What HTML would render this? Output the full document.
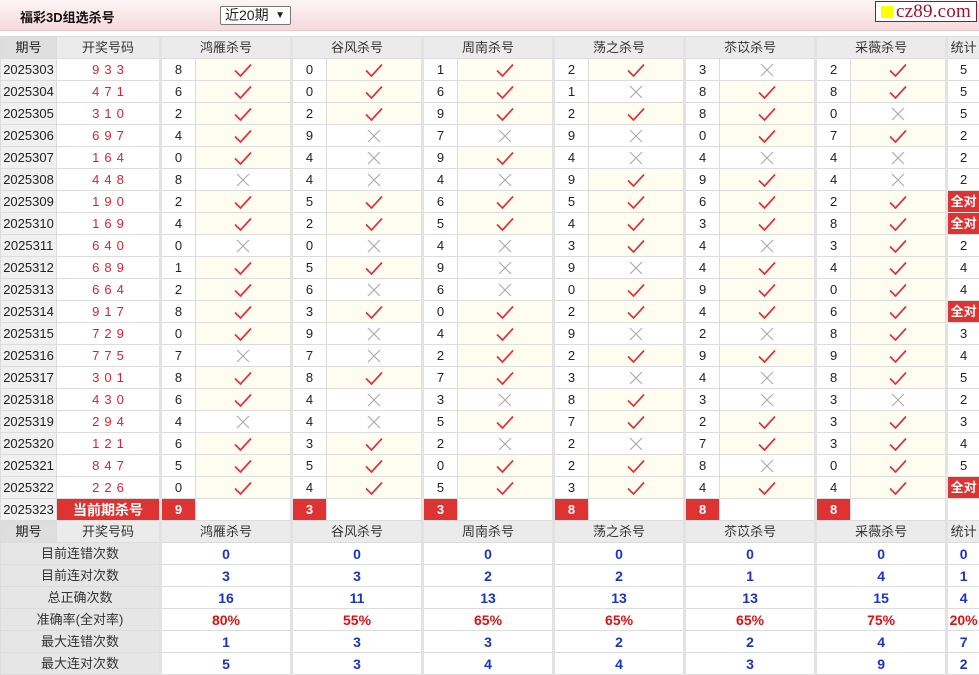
<!DOCTYPE html>
<html><head><meta charset="utf-8">
<style>
*{margin:0;padding:0;box-sizing:border-box}
body{width:979px;height:674px;overflow:hidden;background:#fff;font-family:"Liberation Sans","Noto Sans CJK SC",sans-serif;font-size:13px;color:#222}
.top{position:absolute;left:0;top:0;width:979px;height:31px;background:linear-gradient(#fdf5f6,#f6d9dc);border-bottom:1px solid #e6c9cc}
.title{position:absolute;left:20px;top:7px;font-weight:bold;font-size:13px;color:#111}
.sel{position:absolute;left:220px;top:6px;width:71px;height:19px;border:1px solid #777;background:#fff;font-size:14px;padding-left:4px;line-height:17px;border-radius:2px}
.sel b{position:absolute;right:5px;top:0;font-size:10px}
.logo{position:absolute;left:875px;top:1px;width:102px;height:21px;border:1px solid #a0102a;background:#fff;font-family:"Liberation Serif",serif;font-size:19px;color:#a0102a;line-height:19px;padding-left:20px;letter-spacing:0.2px;white-space:nowrap;overflow:hidden}
.logo i{position:absolute;left:5px;top:4px;width:12px;height:12px;background:#ff0}
table{position:absolute;left:0;top:36px;border-collapse:collapse;table-layout:fixed;width:979px}
td{height:22px;border:1px solid #dcdcdc;text-align:center;padding:0;white-space:nowrap;overflow:hidden;line-height:20px}
.h td{background:#ebebeb;color:#333}
.h td.q{background:#dedede}
td.q{background:#f0f0f0;color:#222}
td.k{color:#e02030;letter-spacing:5px;padding-left:5px}
td.n{border-left:3px solid #e2e2e2}
td.y{background:#fffdf0;color:#e0303f;font-family:"DejaVu Sans",sans-serif;font-size:17px}
td.x{color:#b4b4b4;font-family:"DejaVu Sans",sans-serif;font-size:15px}
td svg{display:block;margin:0 auto}
td.s{border-left:3px solid #e2e2e2}
td.a{background:#d33;color:#fff;font-weight:bold}
td.c{background:#d33;color:#fff;font-weight:bold;font-size:14px}
td.l{background:#e6e6e6;color:#333}
td.v{border-left:3px solid #e2e2e2;color:#1a33cc;font-weight:bold;font-size:14px}
td.p{border-left:3px solid #e2e2e2;color:#e01010;font-weight:bold;font-size:14px}
</style></head><body>
<div class="top"><div class="title">福彩3D组选杀号</div><div class="sel">近20期<b>&#9660;</b></div><div class="logo"><i></i>cz89.com</div></div>
<table>
<colgroup><col style="width:56px"><col style="width:104px"><col style="width:35px"><col style="width:96px"><col style="width:35px"><col style="width:96px"><col style="width:35px"><col style="width:96px"><col style="width:35px"><col style="width:96px"><col style="width:35px"><col style="width:96px"><col style="width:35px"><col style="width:96px"><col style="width:33px"></colgroup>
<tr class="h"><td class="q">期号</td><td>开奖号码</td><td class="n" colspan="2">鸿雁杀号</td><td class="n" colspan="2">谷风杀号</td><td class="n" colspan="2">周南杀号</td><td class="n" colspan="2">荡之杀号</td><td class="n" colspan="2">苶苡杀号</td><td class="n" colspan="2">采薇杀号</td><td class="s">统计</td></tr>
<tr><td class="q">2025303</td><td class="k">933</td><td class="n">8</td><td class="y">✓</td><td class="n">0</td><td class="y">✓</td><td class="n">1</td><td class="y">✓</td><td class="n">2</td><td class="y">✓</td><td class="n">3</td><td class="x">✕</td><td class="n">2</td><td class="y">✓</td><td class="s">5</td></tr>
<tr><td class="q">2025304</td><td class="k">471</td><td class="n">6</td><td class="y">✓</td><td class="n">0</td><td class="y">✓</td><td class="n">6</td><td class="y">✓</td><td class="n">1</td><td class="x">✕</td><td class="n">8</td><td class="y">✓</td><td class="n">8</td><td class="y">✓</td><td class="s">5</td></tr>
<tr><td class="q">2025305</td><td class="k">310</td><td class="n">2</td><td class="y">✓</td><td class="n">2</td><td class="y">✓</td><td class="n">9</td><td class="y">✓</td><td class="n">2</td><td class="y">✓</td><td class="n">8</td><td class="y">✓</td><td class="n">0</td><td class="x">✕</td><td class="s">5</td></tr>
<tr><td class="q">2025306</td><td class="k">697</td><td class="n">4</td><td class="y">✓</td><td class="n">9</td><td class="x">✕</td><td class="n">7</td><td class="x">✕</td><td class="n">9</td><td class="x">✕</td><td class="n">0</td><td class="y">✓</td><td class="n">7</td><td class="y">✓</td><td class="s">2</td></tr>
<tr><td class="q">2025307</td><td class="k">164</td><td class="n">0</td><td class="y">✓</td><td class="n">4</td><td class="x">✕</td><td class="n">9</td><td class="y">✓</td><td class="n">4</td><td class="x">✕</td><td class="n">4</td><td class="x">✕</td><td class="n">4</td><td class="x">✕</td><td class="s">2</td></tr>
<tr><td class="q">2025308</td><td class="k">448</td><td class="n">8</td><td class="x">✕</td><td class="n">4</td><td class="x">✕</td><td class="n">4</td><td class="x">✕</td><td class="n">9</td><td class="y">✓</td><td class="n">9</td><td class="y">✓</td><td class="n">4</td><td class="x">✕</td><td class="s">2</td></tr>
<tr><td class="q">2025309</td><td class="k">190</td><td class="n">2</td><td class="y">✓</td><td class="n">5</td><td class="y">✓</td><td class="n">6</td><td class="y">✓</td><td class="n">5</td><td class="y">✓</td><td class="n">6</td><td class="y">✓</td><td class="n">2</td><td class="y">✓</td><td class="s a">全对</td></tr>
<tr><td class="q">2025310</td><td class="k">169</td><td class="n">4</td><td class="y">✓</td><td class="n">2</td><td class="y">✓</td><td class="n">5</td><td class="y">✓</td><td class="n">4</td><td class="y">✓</td><td class="n">3</td><td class="y">✓</td><td class="n">8</td><td class="y">✓</td><td class="s a">全对</td></tr>
<tr><td class="q">2025311</td><td class="k">640</td><td class="n">0</td><td class="x">✕</td><td class="n">0</td><td class="x">✕</td><td class="n">4</td><td class="x">✕</td><td class="n">3</td><td class="y">✓</td><td class="n">4</td><td class="x">✕</td><td class="n">3</td><td class="y">✓</td><td class="s">2</td></tr>
<tr><td class="q">2025312</td><td class="k">689</td><td class="n">1</td><td class="y">✓</td><td class="n">5</td><td class="y">✓</td><td class="n">9</td><td class="x">✕</td><td class="n">9</td><td class="x">✕</td><td class="n">4</td><td class="y">✓</td><td class="n">4</td><td class="y">✓</td><td class="s">4</td></tr>
<tr><td class="q">2025313</td><td class="k">664</td><td class="n">2</td><td class="y">✓</td><td class="n">6</td><td class="x">✕</td><td class="n">6</td><td class="x">✕</td><td class="n">0</td><td class="y">✓</td><td class="n">9</td><td class="y">✓</td><td class="n">0</td><td class="y">✓</td><td class="s">4</td></tr>
<tr><td class="q">2025314</td><td class="k">917</td><td class="n">8</td><td class="y">✓</td><td class="n">3</td><td class="y">✓</td><td class="n">0</td><td class="y">✓</td><td class="n">2</td><td class="y">✓</td><td class="n">4</td><td class="y">✓</td><td class="n">6</td><td class="y">✓</td><td class="s a">全对</td></tr>
<tr><td class="q">2025315</td><td class="k">729</td><td class="n">0</td><td class="y">✓</td><td class="n">9</td><td class="x">✕</td><td class="n">4</td><td class="y">✓</td><td class="n">9</td><td class="x">✕</td><td class="n">2</td><td class="x">✕</td><td class="n">8</td><td class="y">✓</td><td class="s">3</td></tr>
<tr><td class="q">2025316</td><td class="k">775</td><td class="n">7</td><td class="x">✕</td><td class="n">7</td><td class="x">✕</td><td class="n">2</td><td class="y">✓</td><td class="n">2</td><td class="y">✓</td><td class="n">9</td><td class="y">✓</td><td class="n">9</td><td class="y">✓</td><td class="s">4</td></tr>
<tr><td class="q">2025317</td><td class="k">301</td><td class="n">8</td><td class="y">✓</td><td class="n">8</td><td class="y">✓</td><td class="n">7</td><td class="y">✓</td><td class="n">3</td><td class="x">✕</td><td class="n">4</td><td class="x">✕</td><td class="n">8</td><td class="y">✓</td><td class="s">5</td></tr>
<tr><td class="q">2025318</td><td class="k">430</td><td class="n">6</td><td class="y">✓</td><td class="n">4</td><td class="x">✕</td><td class="n">3</td><td class="x">✕</td><td class="n">8</td><td class="y">✓</td><td class="n">3</td><td class="x">✕</td><td class="n">3</td><td class="x">✕</td><td class="s">2</td></tr>
<tr><td class="q">2025319</td><td class="k">294</td><td class="n">4</td><td class="x">✕</td><td class="n">4</td><td class="x">✕</td><td class="n">5</td><td class="y">✓</td><td class="n">7</td><td class="y">✓</td><td class="n">2</td><td class="y">✓</td><td class="n">3</td><td class="y">✓</td><td class="s">3</td></tr>
<tr><td class="q">2025320</td><td class="k">121</td><td class="n">6</td><td class="y">✓</td><td class="n">3</td><td class="y">✓</td><td class="n">2</td><td class="x">✕</td><td class="n">2</td><td class="x">✕</td><td class="n">7</td><td class="y">✓</td><td class="n">3</td><td class="y">✓</td><td class="s">4</td></tr>
<tr><td class="q">2025321</td><td class="k">847</td><td class="n">5</td><td class="y">✓</td><td class="n">5</td><td class="y">✓</td><td class="n">0</td><td class="y">✓</td><td class="n">2</td><td class="y">✓</td><td class="n">8</td><td class="x">✕</td><td class="n">0</td><td class="y">✓</td><td class="s">5</td></tr>
<tr><td class="q">2025322</td><td class="k">226</td><td class="n">0</td><td class="y">✓</td><td class="n">4</td><td class="y">✓</td><td class="n">5</td><td class="y">✓</td><td class="n">3</td><td class="y">✓</td><td class="n">4</td><td class="y">✓</td><td class="n">4</td><td class="y">✓</td><td class="s a">全对</td></tr>
<tr><td class="q">2025323</td><td class="c">当前期杀号</td><td class="n a">9</td><td></td><td class="n a">3</td><td></td><td class="n a">3</td><td></td><td class="n a">8</td><td></td><td class="n a">8</td><td></td><td class="n a">8</td><td></td><td class="s"></td></tr>
<tr class="h"><td class="q">期号</td><td>开奖号码</td><td class="n" colspan="2">鸿雁杀号</td><td class="n" colspan="2">谷风杀号</td><td class="n" colspan="2">周南杀号</td><td class="n" colspan="2">荡之杀号</td><td class="n" colspan="2">苶苡杀号</td><td class="n" colspan="2">采薇杀号</td><td class="s">统计</td></tr>
<tr><td class="l" colspan="2">目前连错次数</td><td class="v" colspan="2">0</td><td class="v" colspan="2">0</td><td class="v" colspan="2">0</td><td class="v" colspan="2">0</td><td class="v" colspan="2">0</td><td class="v" colspan="2">0</td><td class="v">0</td></tr>
<tr><td class="l" colspan="2">目前连对次数</td><td class="v" colspan="2">3</td><td class="v" colspan="2">3</td><td class="v" colspan="2">2</td><td class="v" colspan="2">2</td><td class="v" colspan="2">1</td><td class="v" colspan="2">4</td><td class="v">1</td></tr>
<tr><td class="l" colspan="2">总正确次数</td><td class="v" colspan="2">16</td><td class="v" colspan="2">11</td><td class="v" colspan="2">13</td><td class="v" colspan="2">13</td><td class="v" colspan="2">13</td><td class="v" colspan="2">15</td><td class="v">4</td></tr>
<tr><td class="l" colspan="2">准确率(全对率)</td><td class="p" colspan="2">80%</td><td class="p" colspan="2">55%</td><td class="p" colspan="2">65%</td><td class="p" colspan="2">65%</td><td class="p" colspan="2">65%</td><td class="p" colspan="2">75%</td><td class="p">20%</td></tr>
<tr><td class="l" colspan="2">最大连错次数</td><td class="v" colspan="2">1</td><td class="v" colspan="2">3</td><td class="v" colspan="2">3</td><td class="v" colspan="2">2</td><td class="v" colspan="2">2</td><td class="v" colspan="2">4</td><td class="v">7</td></tr>
<tr><td class="l" colspan="2">最大连对次数</td><td class="v" colspan="2">5</td><td class="v" colspan="2">3</td><td class="v" colspan="2">4</td><td class="v" colspan="2">4</td><td class="v" colspan="2">3</td><td class="v" colspan="2">9</td><td class="v">2</td></tr>
</table>
<script>
var Y='<svg width="18" height="14" viewBox="0 0 18 14"><path d="M1 7.5 L6.5 13 L17 1.5" stroke="#e0303f" stroke-width="1.7" fill="none"/></svg>';
var X='<svg width="14" height="14" viewBox="0 0 14 14"><path d="M1 1 L13 13 M13 1 L1 13" stroke="#aaa" stroke-width="1.1" fill="none"/></svg>';
document.querySelectorAll('td.y').forEach(function(t){t.innerHTML=Y;});
document.querySelectorAll('td.x').forEach(function(t){t.innerHTML=X;});
</script>
</body></html>
